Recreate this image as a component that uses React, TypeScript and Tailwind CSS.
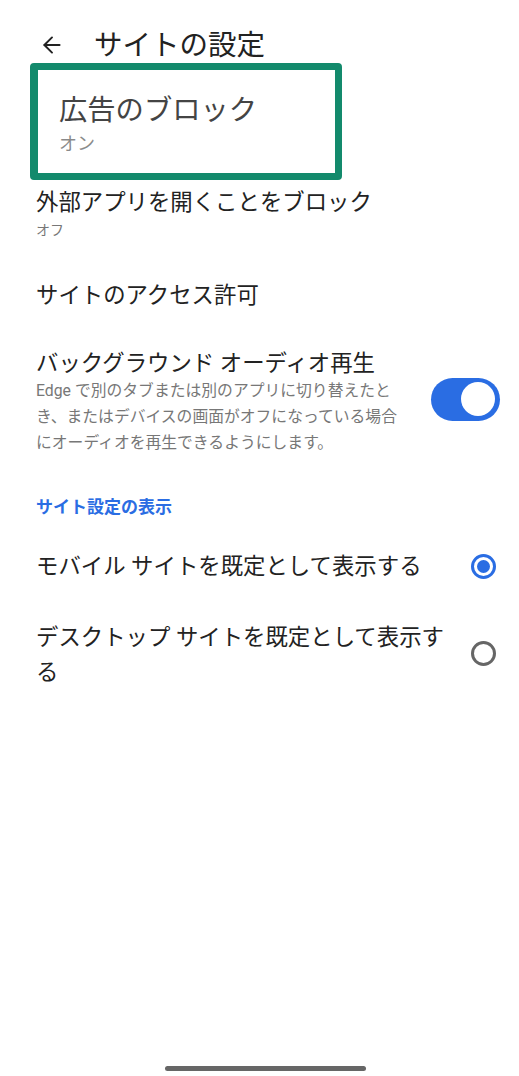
import { ArrowLeft } from 'lucide-react'

const font = { fontFamily: 'Roboto, "Noto Sans CJK JP", sans-serif' }

function Toggle() {
  return (
    <div className="flex h-[43px] w-[69px] shrink-0 items-center justify-end rounded-full bg-[#2a6de3] pr-[5px]">
      <div className="h-[34px] w-[34px] rounded-full bg-white" />
    </div>
  )
}

function Radio({ checked }: { checked?: boolean }) {
  return checked ? (
    <div className="flex h-[25px] w-[25px] shrink-0 items-center justify-center rounded-full border-[3px] border-[#2a6de3]">
      <div className="h-[13px] w-[13px] rounded-full bg-[#2a6de3]" />
    </div>
  ) : (
    <div className="h-[25px] w-[25px] shrink-0 rounded-full border-[3px] border-[#666666]" />
  )
}

export default function App() {
  return (
    <div className="relative h-[1076px] w-[519px] overflow-hidden bg-white text-[#222]" style={font}>
      {/* header */}
      <div className="flex h-[36px] items-center pl-[39px] mt-[28px]">
        <ArrowLeft size={26} strokeWidth={1.8} className="-mt-[2px] text-[#222]" />
        <span className="ml-[29px] text-[28.5px] leading-[36px] text-[#222]">サイトの設定</span>
      </div>

      {/* highlighted item */}
      <div className="-mt-[1px] ml-[30px] h-[117px] w-[312px] rounded-[4px] border-[7px] border-l-[8px] border-[#138a6c] pl-[21px] pt-[23px]">
        <div className="text-[28.3px] leading-[36px] text-[#444]">広告のブロック</div>
        <div className="mt-[3px] text-[18px] leading-[24px] text-[#8a8a8a]">オン</div>
      </div>

      <div className="pl-[36px] pr-[19px]">
        <div className="mt-[7px] text-[22.4px] leading-[30px]">外部アプリを開くことをブロック</div>
        <div className="mt-[3px] text-[14px] leading-[20px] text-[#777]">オフ</div>

        <div className="mt-[40px] text-[22.4px] leading-[30px]">サイトのアクセス許可</div>

        <div className="mt-[38px] flex items-center justify-between">
          <div>
            <div className="text-[22.4px] leading-[30px]">バックグラウンド オーディオ再生</div>
            <div className="w-[375px] text-[15.8px] leading-[26px] text-[#777]">
              Edge で別のタブまたは別のアプリに切り替えたと
              <br />
              き、またはデバイスの画面がオフになっている場合
              <br />
              にオーディオを再生できるようにします。
            </div>
          </div>
          <div className="-mt-[6px]">
            <Toggle />
          </div>
        </div>

        <div className="mt-[39px] text-[17px] font-bold leading-[24px] text-[#2a6de3]">サイト設定の表示</div>

        <div className="mt-[31px] flex items-center justify-between pr-[4px]">
          <div className="text-[22.4px] leading-[32px]">モバイル サイトを既定として表示する</div>
          <Radio checked />
        </div>

        <div className="mt-[38px] flex items-center justify-between pr-[4px]">
          <div className="w-[416px] text-[22.4px] leading-[35px]">デスクトップ サイトを既定として表示する</div>
          <div className="-mt-[4px]">
            <Radio />
          </div>
        </div>
      </div>

      {/* gesture bar */}
      <div className="absolute bottom-[5px] left-[165px] h-[5px] w-[201px] rounded-full bg-[#666]" />
    </div>
  )
}
